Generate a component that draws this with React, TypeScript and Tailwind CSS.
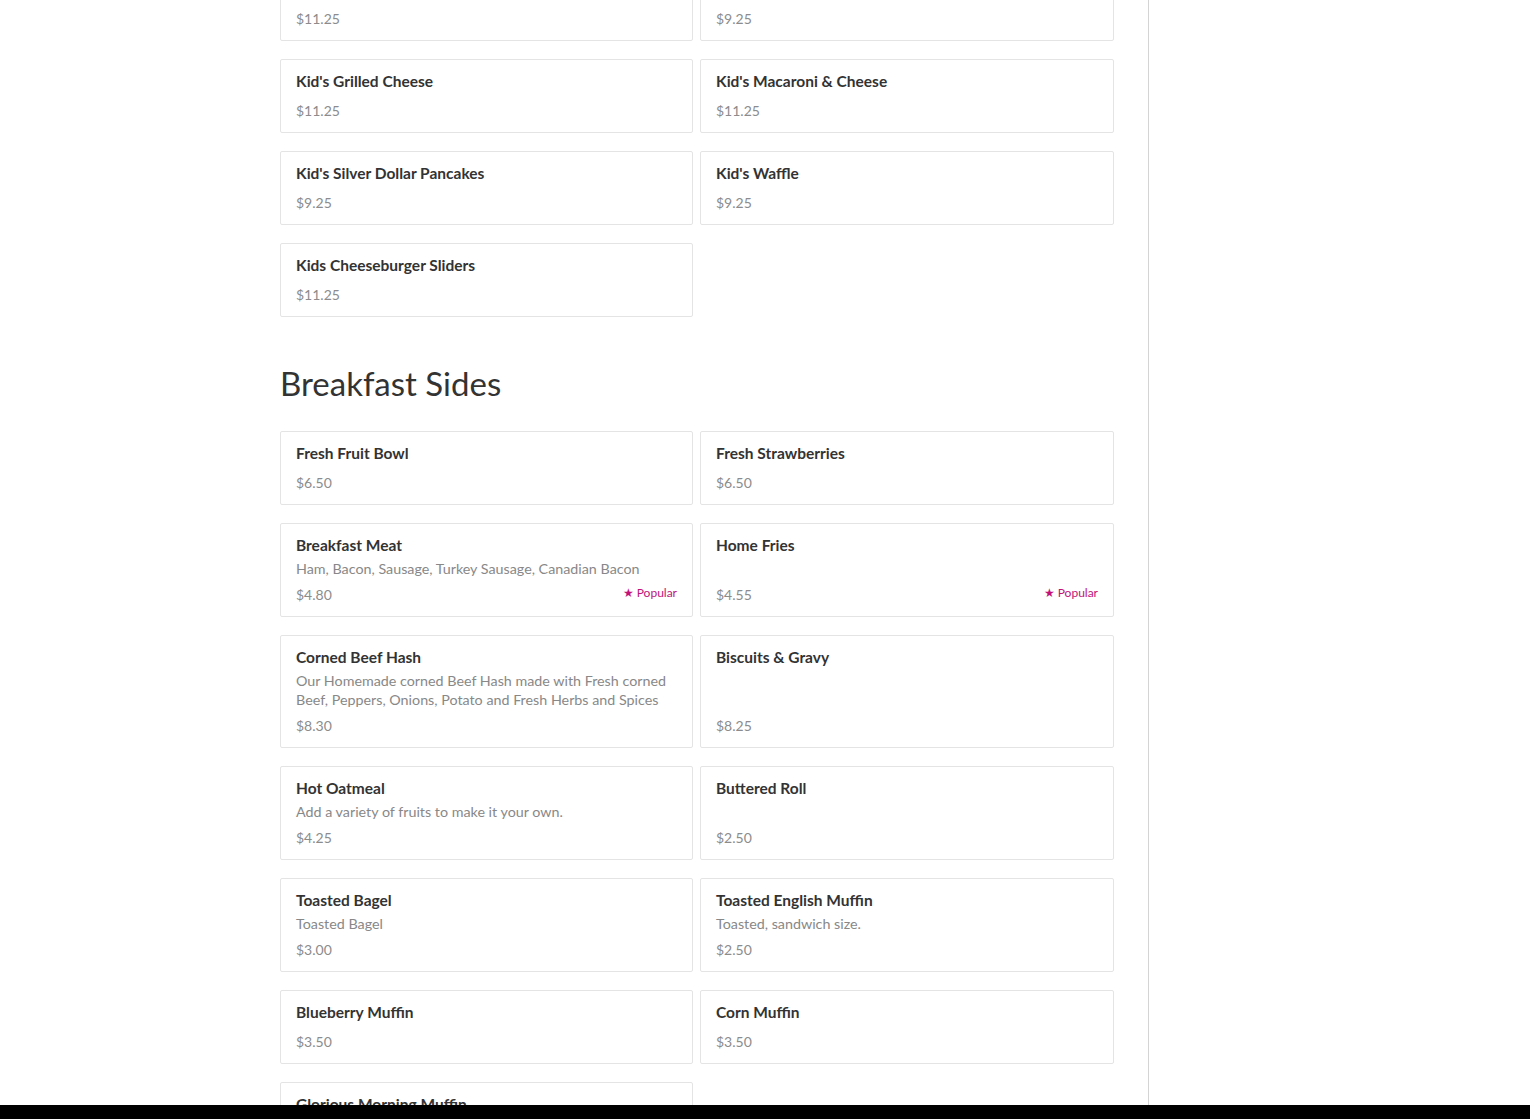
import React from 'react';

interface Item {
    name: string;
    price: string;
    desc?: string;
    popular?: boolean;
}

const kids: Item[] = [
    { name: "Kid's Chicken Tenders", price: '$11.25' },
    { name: "Kid's French Toast", price: '$9.25' },
    { name: "Kid's Grilled Cheese", price: '$11.25' },
    { name: "Kid's Macaroni & Cheese", price: '$11.25' },
    { name: "Kid's Silver Dollar Pancakes", price: '$9.25' },
    { name: "Kid's Waffle", price: '$9.25' },
    { name: 'Kids Cheeseburger Sliders', price: '$11.25' },
];

const sides: Item[] = [
    { name: 'Fresh Fruit Bowl', price: '$6.50' },
    { name: 'Fresh Strawberries', price: '$6.50' },
    { name: 'Breakfast Meat', price: '$4.80', desc: 'Ham, Bacon, Sausage, Turkey Sausage, Canadian Bacon', popular: true },
    { name: 'Home Fries', price: '$4.55', popular: true },
    { name: 'Corned Beef Hash', price: '$8.30', desc: 'Our Homemade corned Beef Hash made with Fresh corned Beef, Peppers, Onions, Potato and Fresh Herbs and Spices' },
    { name: 'Biscuits & Gravy', price: '$8.25' },
    { name: 'Hot Oatmeal', price: '$4.25', desc: 'Add a variety of fruits to make it your own.' },
    { name: 'Buttered Roll', price: '$2.50' },
    { name: 'Toasted Bagel', price: '$3.00', desc: 'Toasted Bagel' },
    { name: 'Toasted English Muffin', price: '$2.50', desc: 'Toasted, sandwich size.' },
    { name: 'Blueberry Muffin', price: '$3.50' },
    { name: 'Corn Muffin', price: '$3.50' },
    { name: 'Glorious Morning Muffin', price: '$3.50' },
];

function MenuCard({ item }: { item: Item }) {
    return (
        <div className="flex flex-col bg-white border border-[#e4e4e4] rounded-[2px] px-[15px] pt-[11px] pb-[11px]">
            <h3 className={`text-[15.5px] leading-[21px] font-bold text-[#333] ${item.desc ? 'mb-[3px]' : 'mb-[9px]'}`}>
                {item.name}
            </h3>
            {item.desc && (
                <p className="text-[14.3px] leading-[19px] text-[#888] mb-[7px]">{item.desc}</p>
            )}
            <div className="mt-auto flex items-center justify-between">
                <span className="text-[14px] leading-[20px] text-[#8c8c8c]">{item.price}</span>
                {item.popular && (
                    <span className="text-[12px] leading-[16px] text-[#c2127a] -mt-[4px]">★ Popular</span>
                )}
            </div>
        </div>
    );
}

export default function App() {
    return (
        <div className="relative h-[1119px] overflow-hidden bg-white" style={{ fontFamily: 'Lato, "Noto Sans", sans-serif' }}>
            <div className="flex h-full pl-[280px]">
                <main className="w-[834px] -mt-[33px]">
                    <div className="grid grid-cols-[413px_414px] gap-x-[7px] gap-y-[18px]">
                        {kids.map(i => <MenuCard key={i.name} item={i} />)}
                    </div>

                    <h2 className="mt-[44px] mb-[26px] text-[33px] leading-[44px] font-normal text-[#333]">Breakfast Sides</h2>

                    <div className="grid grid-cols-[413px_414px] gap-x-[7px] gap-y-[18px]">
                        {sides.map(i => <MenuCard key={i.name} item={i} />)}
                    </div>
                </main>
                <aside className="ml-[34px] flex-1 border-l border-[#d4d4d4]" />
            </div>
            <div className="absolute left-0 right-0 bottom-0 h-[14px] bg-black" />
        </div>
    );
}
